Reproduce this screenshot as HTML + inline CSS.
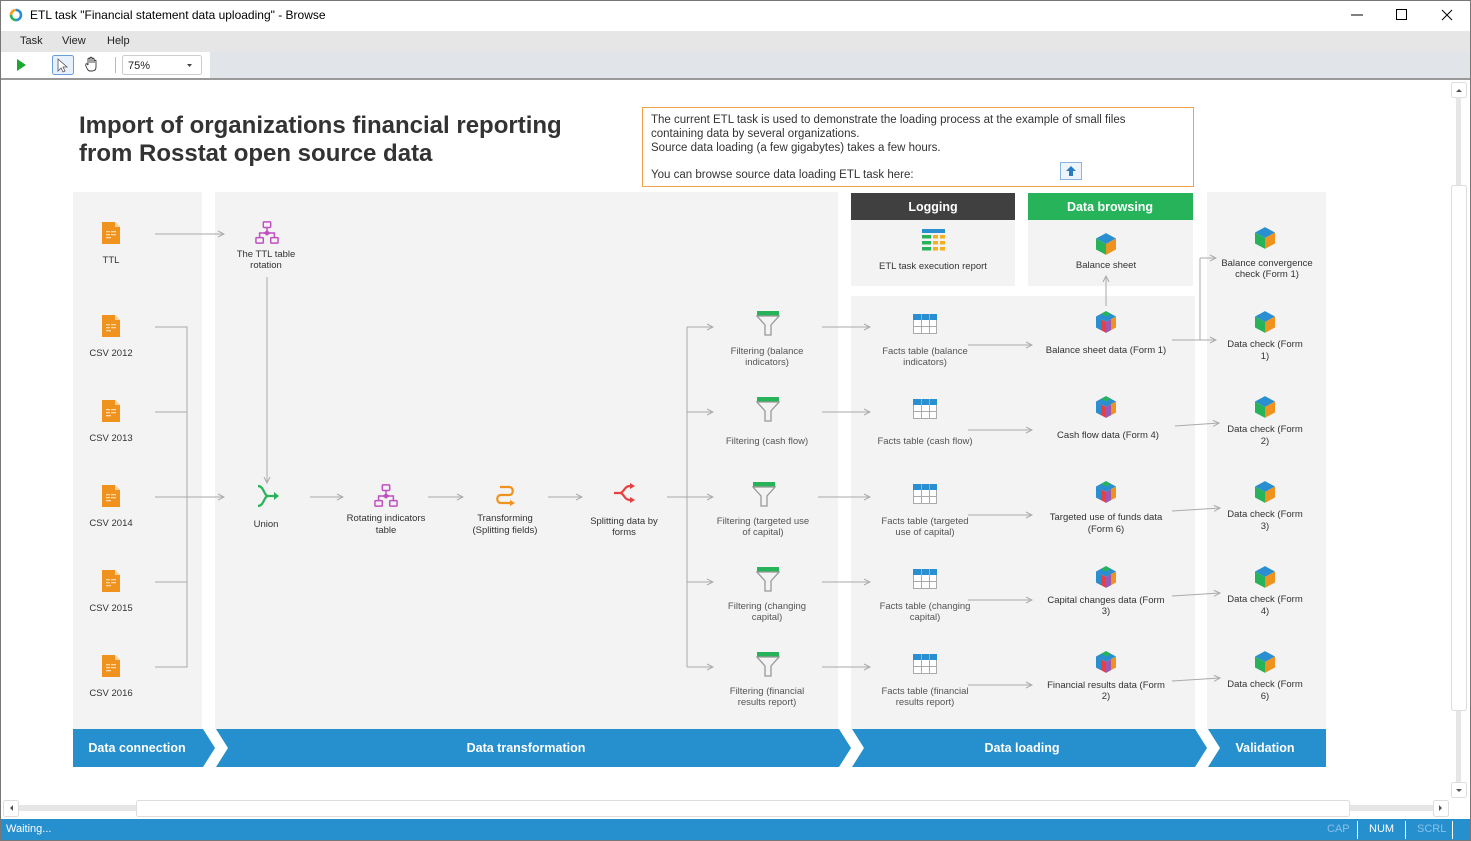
<!DOCTYPE html>
<html><head><meta charset="utf-8"><style>
*{margin:0;padding:0;box-sizing:border-box}
body{width:1471px;height:841px;overflow:hidden;background:#fff;font-family:"Liberation Sans",Arial,sans-serif;position:relative}
.abs{position:absolute}
</style></head><body>
<!-- title bar -->
<div class="abs" style="left:0;top:0;width:1471px;height:31px;background:#fff"></div>
<svg class="abs" style="left:8px;top:7px" width="16" height="16" viewBox="0 0 16 16">
<path d="M3 8a5 5 0 0 1 5-5" stroke="#f0a020" stroke-width="2.6" fill="none"/>
<path d="M8 3a5 5 0 0 1 5 5" stroke="#2a8fd0" stroke-width="2.6" fill="none"/>
<path d="M13 8a5 5 0 0 1-5 5" stroke="#2a8fd0" stroke-width="2.6" fill="none"/>
<path d="M8 13a5 5 0 0 1-5-5" stroke="#30b050" stroke-width="2.6" fill="none"/></svg>
<div class="abs" style="left:30px;top:8px;font-size:12px;color:#000">ETL task "Financial statement data uploading" - Browse</div>
<svg class="abs" style="left:1340px;top:0" width="131" height="31">
<line x1="11" y1="15" x2="23" y2="15" stroke="#000"/>
<rect x="56.5" y="9.5" width="10" height="10" fill="none" stroke="#000"/>
<path d="M102 10l10 10M112 10l-10 10" stroke="#000"/></svg>
<!-- menu -->
<div class="abs" style="left:0;top:31px;width:1471px;height:21px;background:#e6e6e6"></div>
<div class="abs" style="left:20px;top:35px;font-size:11px;color:#222">Task</div>
<div class="abs" style="left:62px;top:35px;font-size:11px;color:#222">View</div>
<div class="abs" style="left:107px;top:35px;font-size:11px;color:#222">Help</div>
<!-- toolbar -->
<div class="abs" style="left:0;top:52px;width:1471px;height:27px;background:#e1e5e9"></div>
<div class="abs" style="left:0;top:52px;width:210px;height:26px;background:#fff"></div>
<svg class="abs" style="left:0;top:52px" width="210" height="26">
<path d="M17 7l9 6-9 6z" fill="#1aa830"/>
<rect x="52.5" y="3.5" width="21" height="19" rx="2" fill="#e8f1fb" stroke="#6a9fd8"/>
<path d="M58 7v12l3-3 2 4 2-1-2-4h4z" fill="#fff" stroke="#555" stroke-width="0.8"/>
<path d="M88 18c-2-3-3-5-2-6s2 1 2 1V7c0-1 2-1 2 0v4-5c0-1 2-1 2 0v5-4c0-1 2-1 2 0v4-2c0-1 2-1 2 0v6c0 3-2 4-4 4h-2c-1 0-2-1-2-1z" fill="#fff" stroke="#333" stroke-width="0.9"/>
<line x1="115.5" y1="5" x2="115.5" y2="21" stroke="#bbb"/>
<rect x="122.5" y="3.5" width="79" height="19" rx="2" fill="#fff" stroke="#ccc"/>
<text x="128" y="17" font-size="11" fill="#222" font-family="Liberation Sans">75%</text>
<path d="M187 12h5l-2.5 3z" fill="#444"/></svg>
<div class="abs" style="left:0;top:78px;width:1471px;height:2px;background:#999"></div>

<!-- canvas -->
<svg class="abs" style="left:0;top:80px" width="1471" height="739" viewBox="0 80 1471 739" font-family="Liberation Sans,Arial,sans-serif">
<defs>
<symbol id="doc" viewBox="0 0 18 22"><path d="M0 0h13l5 5v17H0z" fill="#f0921e"/><path d="M13 0v5h5z" fill="#fbd29a"/><g fill="#fcd8a8"><rect x="4" y="9" width="4" height="1.3"/><rect x="9" y="9" width="5" height="1.3"/><rect x="4" y="12" width="4" height="1.3"/><rect x="9" y="12" width="5" height="1.3"/><rect x="4" y="15" width="5" height="1.3"/></g></symbol>
<symbol id="fun" viewBox="0 0 24 26"><path d="M1 1h22v5H1z" fill="#27b35a"/><path d="M1 6h22l-8 9v10h-6V15z" fill="none" stroke="#999" stroke-width="1.3"/></symbol>
<symbol id="tab" viewBox="0 0 24 20"><rect x="0.5" y="0.5" width="23" height="19" fill="#fff" stroke="#aaa"/><rect x="0" y="0" width="24" height="6" fill="#2a8fd0"/><path d="M0 12.5h24M8.5 0v20M16.5 0v20" stroke="#aaa"/></symbol>
<symbol id="cube" viewBox="0 0 22 24"><path d="M11 0l11 6-11 6L0 6z" fill="#2a8fd0"/><path d="M0 6l11 6v12L0 18z" fill="#27b35a"/><path d="M22 6l-11 6v12l11-6z" fill="#f0921e"/></symbol>
<symbol id="mcube" viewBox="0 0 22 24"><path d="M11 0l11 6-11 6L0 6z" fill="#2a8fd0"/><path d="M11 0l5.5 3-5.5 3-5.5-3z" fill="#27b35a"/><path d="M0 6l11 6v12L0 18z" fill="#e84040"/><path d="M0 6l5.5 3v12L0 18z" fill="#2a8fd0"/><path d="M22 6l-11 6v12l11-6z" fill="#f0921e"/><path d="M16.5 9v12L11 24V12z" fill="#9b59b6"/></symbol>
<symbol id="tree" viewBox="0 0 26 26"><g fill="none" stroke="#c04fc0" stroke-width="1.6"><rect x="9" y="1" width="8" height="6" rx="1"/><rect x="1" y="18" width="8" height="6" rx="1"/><rect x="17" y="18" width="8" height="6" rx="1"/><path d="M13 7v6M5 18v-5h16v5"/></g><path d="M13 10l4 3-4 3-4-3z" fill="#c04fc0"/></symbol>
<marker id="ar" markerWidth="8" markerHeight="8" refX="7" refY="4" orient="auto" markerUnits="userSpaceOnUse"><path d="M1 1l6 3-6 3" fill="none" stroke="#aaa" stroke-width="1"/></marker>
</defs>
<rect x="2" y="80" width="1449" height="720" fill="#fff"/>
<!-- title -->
<text x="79" y="133" font-size="24" font-weight="bold" fill="#333">Import of organizations financial reporting</text>
<text x="79" y="161" font-size="24" font-weight="bold" fill="#333">from Rosstat open source data</text>
<rect x="642.5" y="107.5" width="551" height="79" fill="#fff" stroke="#f0a24a"/>
<g font-size="11.5" fill="#333"><text x="651" y="123">The current ETL task is used to demonstrate the loading process at the example of small files</text><text x="651" y="137">containing data by several organizations.</text><text x="651" y="151">Source data loading (a few gigabytes) takes a few hours.</text><text x="651" y="178">You can browse source data loading ETL task here:</text></g>
<rect x="1060.5" y="162.5" width="21" height="17" fill="#eef4fb" stroke="#8ab4e0"/><path d="M1071 166l-5 5h3v5h4v-5h3z" fill="#2a7cc0"/>
<!-- panels -->
<g fill="#f3f3f3">
<rect x="73" y="192" width="129" height="537"/>
<rect x="215" y="192" width="623" height="537"/>
<rect x="851" y="193" width="164" height="93"/>
<rect x="1028" y="193" width="165" height="93"/>
<rect x="851" y="296" width="344" height="433"/>
<rect x="1207" y="192" width="119" height="537"/>
</g>
<rect x="851" y="193" width="164" height="27" fill="#404040"/>
<rect x="1028" y="193" width="165" height="27" fill="#27b35a"/>
<text x="933" y="211" font-size="12.5" font-weight="bold" fill="#fff" text-anchor="middle">Logging</text>
<text x="1110" y="211" font-size="12.5" font-weight="bold" fill="#fff" text-anchor="middle">Data browsing</text>
<!-- banner -->
<g fill="#268fcd">
<path d="M73 729h130l12 19-12 19H73z"/>
<path d="M216 729h623l12 19-12 19H216l12-19z"/>
<path d="M852 729h343l12 19-12 19H852l12-19z"/>
<path d="M1208 729h118v38H1208l12-19z"/>
</g>
<g font-size="12.5" font-weight="bold" fill="#fff" text-anchor="middle">
<text x="137" y="752">Data connection</text><text x="526" y="752">Data transformation</text><text x="1022" y="752">Data loading</text><text x="1265" y="752">Validation</text></g>
<!-- lines -->
<g stroke="#aaa" stroke-width="1" fill="none">
<path d="M155 234H224" marker-end="url(#ar)"/>
<path d="M155 327h32v340h-32M155 412h32M155 582h32"/>
<path d="M155 497H224" marker-end="url(#ar)"/>
<path d="M267 277V483" marker-end="url(#ar)"/>
<path d="M310 497h33" marker-end="url(#ar)"/>
<path d="M428 497h35" marker-end="url(#ar)"/>
<path d="M548 497h34" marker-end="url(#ar)"/>
<path d="M667 497h20M687 327v340"/>
<path d="M687 327h26" marker-end="url(#ar)"/><path d="M687 412h26" marker-end="url(#ar)"/><path d="M687 497h26" marker-end="url(#ar)"/><path d="M687 582h26" marker-end="url(#ar)"/><path d="M687 667h26" marker-end="url(#ar)"/>
<path d="M822 327h48" marker-end="url(#ar)"/><path d="M822 412h48" marker-end="url(#ar)"/><path d="M818 497h52" marker-end="url(#ar)"/><path d="M822 582h48" marker-end="url(#ar)"/><path d="M822 667h48" marker-end="url(#ar)"/>
<path d="M968 345h64" marker-end="url(#ar)"/><path d="M968 430h64" marker-end="url(#ar)"/><path d="M968 515h64" marker-end="url(#ar)"/><path d="M968 600h64" marker-end="url(#ar)"/><path d="M968 685h64" marker-end="url(#ar)"/>
<path d="M1106 306V276" marker-end="url(#ar)"/>
<path d="M1172 340h28V258"/><path d="M1200 258h16" marker-end="url(#ar)"/><path d="M1200 340h16" marker-end="url(#ar)"/>
<path d="M1175 426l44-3" marker-end="url(#ar)"/><path d="M1172 511l48-3" marker-end="url(#ar)"/><path d="M1172 596l48-3" marker-end="url(#ar)"/><path d="M1172 681l48-3" marker-end="url(#ar)"/>
</g>
<!-- icons -->
<use href="#doc" x="102" y="222" width="18" height="22"/>
<use href="#doc" x="102" y="315" width="18" height="22"/>
<use href="#doc" x="102" y="400" width="18" height="22"/>
<use href="#doc" x="102" y="485" width="18" height="22"/>
<use href="#doc" x="102" y="570" width="18" height="22"/>
<use href="#doc" x="102" y="655" width="18" height="22"/>
<use href="#tree" x="255" y="221" width="24" height="24"/>
<use href="#tree" x="374" y="484" width="24" height="24"/>
<path d="M258 486c6 0 6 10 10 10M258 506c6 0 6-10 10-10h8" stroke="#27b35a" stroke-width="2.2" fill="none"/><path d="M274 492l5 4-5 4z" fill="#27b35a"/>
<path d="M500 487h9c5 0 5 8 0 8h-8c-5 0-5 8 0 8h10" stroke="#f0921e" stroke-width="2.2" fill="none"/><path d="M510 500l5 3-5 3z" fill="#f0921e"/>
<path d="M614 493h6c4 0 4-7 10-7M620 493c4 0 4 7 10 7" stroke="#e84040" stroke-width="2.2" fill="none"/><path d="M630 483l5 3-5 3zM630 497l5 3-5 3z" fill="#e84040"/>
<use href="#fun" x="756" y="310" width="24" height="26"/>
<use href="#fun" x="756" y="396" width="24" height="26"/>
<use href="#fun" x="752" y="481" width="24" height="26"/>
<use href="#fun" x="756" y="566" width="24" height="26"/>
<use href="#fun" x="756" y="651" width="24" height="26"/>
<use href="#tab" x="913" y="314" width="24" height="20"/>
<use href="#tab" x="913" y="399" width="24" height="20"/>
<use href="#tab" x="913" y="484" width="24" height="20"/>
<use href="#tab" x="913" y="569" width="24" height="20"/>
<use href="#tab" x="913" y="654" width="24" height="20"/>
<g><rect x="922" y="229" width="23" height="4" fill="#2a8fd0"/>
<g fill="#27b35a"><rect x="922" y="235" width="9" height="3.5"/><rect x="922" y="241" width="9" height="3.5"/><rect x="922" y="247" width="9" height="3.5"/></g>
<g fill="#f5b020"><rect x="933" y="235" width="5" height="3.5"/><rect x="940" y="235" width="5" height="3.5"/><rect x="933" y="241" width="5" height="3.5"/><rect x="940" y="241" width="5" height="3.5"/><rect x="933" y="247" width="5" height="3.5"/><rect x="940" y="247" width="5" height="3.5"/></g></g>
<use href="#cube" x="1096" y="233" width="20" height="22"/>
<use href="#mcube" x="1096" y="311" width="20" height="22"/>
<use href="#mcube" x="1096" y="396" width="20" height="22"/>
<use href="#mcube" x="1096" y="481" width="20" height="22"/>
<use href="#mcube" x="1096" y="566" width="20" height="22"/>
<use href="#mcube" x="1096" y="651" width="20" height="22"/>
<use href="#cube" x="1255" y="227" width="20" height="22"/>
<use href="#cube" x="1255" y="311" width="20" height="22"/>
<use href="#cube" x="1255" y="396" width="20" height="22"/>
<use href="#cube" x="1255" y="481" width="20" height="22"/>
<use href="#cube" x="1255" y="566" width="20" height="22"/>
<use href="#cube" x="1255" y="651" width="20" height="22"/>
<!-- labels -->
<g font-size="9.5" fill="#333" text-anchor="middle">
<text x="111" y="263">TTL</text><text x="111" y="356">CSV 2012</text><text x="111" y="441">CSV 2013</text><text x="111" y="526">CSV 2014</text><text x="111" y="611">CSV 2015</text><text x="111" y="696">CSV 2016</text>
<text x="266" y="257">The TTL table</text><text x="266" y="268">rotation</text>
<text x="266" y="527">Union</text>
<text x="386" y="521">Rotating indicators</text><text x="386" y="533">table</text>
<text x="505" y="521">Transforming</text><text x="505" y="533">(Splitting fields)</text>
<text x="624" y="524">Splitting data by</text><text x="624" y="535">forms</text>
<text x="933" y="269">ETL task execution report</text>
<text x="1106" y="268">Balance sheet</text>
<text x="1106" y="353">Balance sheet data (Form 1)</text>
<text x="1108" y="438">Cash flow data (Form 4)</text>
<text x="1106" y="520">Targeted use of funds data</text><text x="1106" y="532">(Form 6)</text>
<text x="1106" y="603">Capital changes data (Form</text><text x="1106" y="614">3)</text>
<text x="1106" y="688">Financial results data (Form</text><text x="1106" y="699">2)</text>
<text x="1267" y="266">Balance convergence</text><text x="1267" y="277">check (Form 1)</text>
<text x="1265" y="347">Data check (Form</text><text x="1265" y="359">1)</text>
<text x="1265" y="432">Data check (Form</text><text x="1265" y="444">2)</text>
<text x="1265" y="517">Data check (Form</text><text x="1265" y="529">3)</text>
<text x="1265" y="602">Data check (Form</text><text x="1265" y="614">4)</text>
<text x="1265" y="687">Data check (Form</text><text x="1265" y="699">6)</text>
</g>
<g font-size="9.5" fill="#555" text-anchor="middle">
<text x="767" y="354">Filtering (balance</text><text x="767" y="365">indicators)</text>
<text x="767" y="444">Filtering (cash flow)</text>
<text x="763" y="524">Filtering (targeted use</text><text x="763" y="535">of capital)</text>
<text x="767" y="609">Filtering (changing</text><text x="767" y="620">capital)</text>
<text x="767" y="694">Filtering (financial</text><text x="767" y="705">results report)</text>
<text x="925" y="354">Facts table (balance</text><text x="925" y="365">indicators)</text>
<text x="925" y="444">Facts table (cash flow)</text>
<text x="925" y="524">Facts table (targeted</text><text x="925" y="535">use of capital)</text>
<text x="925" y="609">Facts table (changing</text><text x="925" y="620">capital)</text>
<text x="925" y="694">Facts table (financial</text><text x="925" y="705">results report)</text>
</g>
<!-- scrollbars -->
<rect x="1451" y="80" width="18" height="720" fill="#fff"/>
<rect x="1451.5" y="82.5" width="15" height="15" rx="2" fill="#fff" stroke="#ddd"/><path d="M1456 92h6l-3-3z" fill="#555"/>
<rect x="1456" y="97" width="5" height="686" fill="#e6e6e6"/>
<rect x="1451.5" y="185.5" width="15" height="525" rx="2" fill="#fff" stroke="#ddd"/>
<rect x="1451.5" y="782.5" width="15" height="15" rx="2" fill="#fff" stroke="#ddd"/><path d="M1456 789h6l-3 3z" fill="#555"/>
<rect x="3.5" y="800.5" width="15" height="16" rx="2" fill="#fff" stroke="#ddd"/><path d="M13 805v6l-3-3z" fill="#555"/>
<rect x="19" y="805" width="1415" height="6" fill="#e6e6e6"/>
<rect x="136.5" y="800.5" width="1213" height="16" rx="2" fill="#fff" stroke="#ddd"/>
<rect x="1433.5" y="800.5" width="15" height="16" rx="2" fill="#fff" stroke="#ddd"/><path d="M1439 805v6l3-3z" fill="#555"/>
</svg>
<!-- status bar -->
<div class="abs" style="left:0;top:819px;width:1471px;height:22px;background:#268fcd"></div>
<div class="abs" style="left:6px;top:823px;font-size:11px;color:#fff">Waiting...</div>
<div class="abs" style="left:1327px;top:823px;font-size:11px;color:#8cc0e6">CAP</div>
<div class="abs" style="left:1357px;top:821px;width:1px;height:18px;background:#fff"></div>
<div class="abs" style="left:1369px;top:823px;font-size:11px;color:#fff">NUM</div>
<div class="abs" style="left:1405px;top:821px;width:1px;height:18px;background:#fff"></div>
<div class="abs" style="left:1417px;top:823px;font-size:11px;color:#8cc0e6">SCRL</div>
<div class="abs" style="left:1452px;top:821px;width:1px;height:18px;background:#fff"></div>
<div class="abs" style="left:0;top:0;width:1471px;height:841px;border:1px solid #777;pointer-events:none"></div>
</body></html>
